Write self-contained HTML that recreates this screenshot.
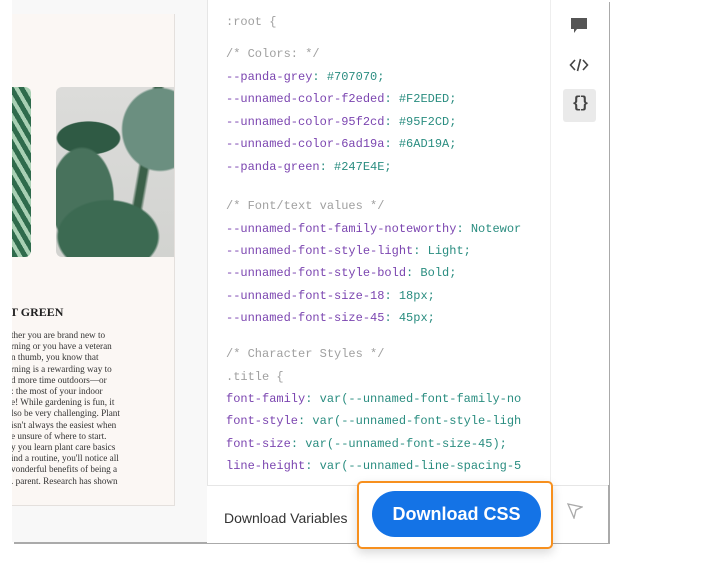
<!DOCTYPE html><html><head><style>
body{margin:0;width:719px;height:564px;background:#fff;position:relative;overflow:hidden;font-family:"Liberation Sans",sans-serif}
.frame{position:absolute;left:12px;top:0;width:596px;height:542px;background:#f8f8f8;box-shadow:2px 2px 0 #aaa}
.art{position:absolute;left:12px;top:14px;width:162px;height:491px;background:#fbf7f4;border-right:1px solid #e4e0dd;border-bottom:1px solid #e4e0dd;overflow:hidden}
.code{position:absolute;left:207px;top:0;width:343px;height:485px;background:#fff;border-left:1px solid #e6e6e6}
.clip{position:absolute;left:0;top:0;width:313px;height:485px;overflow:hidden}
.clip div{position:absolute;left:18px;font-family:"Liberation Mono",monospace;font-size:12px;white-space:nowrap;color:#2a8d80}
.c{color:#a0a0a0!important}.p{color:#7b45b0}
.bar{position:absolute;left:207px;top:485px;width:401px;height:57px;background:#fff;border-top:1px solid #e6e6e6}
.tool{position:absolute;left:550px;top:0;width:58px;height:485px;background:#fff;border-left:1px solid #eee}
</style></head><body>
<div class="frame"></div>
<div class="art">
<div style="position:absolute;left:-10px;top:73px;width:29px;height:170px;border-radius:6px;background:repeating-linear-gradient(60deg,#2f6b4c 0 5px,#a9d0b4 5px 9px)"></div>
<div style="position:absolute;left:44px;top:73px;width:130px;height:170px;border-radius:6px;background:radial-gradient(ellipse 30% 25% at 80% 25%,#6b8f80 0 95%,transparent 100%),radial-gradient(ellipse 40% 22% at 40% 88%,#3c6a52 0 95%,transparent 100%),radial-gradient(ellipse 25% 30% at 20% 65%,#48725c 0 95%,transparent 100%),radial-gradient(ellipse 25% 10% at 25% 30%,#2f5a44 0 95%,transparent 100%),linear-gradient(100deg,transparent 60%,#3a5f48 62% 66%,transparent 68%),linear-gradient(#dcdcda,#d2d3d0)"></div>
<div style="position:absolute;left:-2px;top:291px;font-family:'Liberation Serif',serif;font-size:12px;font-weight:bold;color:#222">T GREEN</div>
<div style="position:absolute;left:-1px;top:316px;font-family:'Liberation Serif',serif;font-size:9.2px;line-height:11.2px;color:#333;white-space:nowrap">ther you are brand new to<br>rning or you have a veteran<br>n thumb, you know that<br>rning is a rewarding way to<br>d more time outdoors—or<br>: the most of your indoor<br>e! While gardening is fun, it<br>lso be very challenging. Plant<br>isn't always the easiest when<br>e unsure of where to start.<br>y you learn plant care basics<br>ind a routine, you'll notice all<br>vonderful benefits of being a<br>. parent. Research has shown</div>
</div>
<div class="code"><div class="clip">
<div class="c" style="top:15px">:root {</div>
<div class="c" style="top:47px">/* Colors: */</div>
<div style="top:70px"><span class="p">--panda-grey</span>: #707070;</div>
<div style="top:92px"><span class="p">--unnamed-color-f2eded</span>: #F2EDED;</div>
<div style="top:115px"><span class="p">--unnamed-color-95f2cd</span>: #95F2CD;</div>
<div style="top:137px"><span class="p">--unnamed-color-6ad19a</span>: #6AD19A;</div>
<div style="top:160px"><span class="p">--panda-green</span>: #247E4E;</div>
<div class="c" style="top:199px">/* Font/text values */</div>
<div style="top:222px"><span class="p">--unnamed-font-family-noteworthy</span>: Noteworthy;</div>
<div style="top:244px"><span class="p">--unnamed-font-style-light</span>: Light;</div>
<div style="top:266px"><span class="p">--unnamed-font-style-bold</span>: Bold;</div>
<div style="top:289px"><span class="p">--unnamed-font-size-18</span>: 18px;</div>
<div style="top:311px"><span class="p">--unnamed-font-size-45</span>: 45px;</div>
<div class="c" style="top:347px">/* Character Styles */</div>
<div class="c" style="top:370px">.title {</div>
<div style="top:392px"><span class="p">font-family</span>: var(--unnamed-font-family-noteworthy);</div>
<div style="top:414px"><span class="p">font-style</span>: var(--unnamed-font-style-light);</div>
<div style="top:437px"><span class="p">font-size</span>: var(--unnamed-font-size-45);</div>
<div style="top:459px"><span class="p">line-height</span>: var(--unnamed-line-spacing-54);</div>
</div></div>
<div class="tool">
<svg style="position:absolute;left:19px;top:17px" width="18" height="17" viewBox="0 0 18 17"><path d="M1 1h16v11H7l-3 4v-4H1z" fill="#555"/></svg>
<svg style="position:absolute;left:18px;top:57px" width="20" height="16" viewBox="0 0 20 16" fill="none" stroke="#444" stroke-width="1.6"><path d="M6 3L1.5 8 6 13M14 3l4.5 5-4.5 5M11.5 2L8.5 14"/></svg>
<div style="position:absolute;left:12px;top:89px;width:33px;height:33px;background:#eaeaea;border-radius:3px"></div>
<div style="position:absolute;left:12px;top:94px;width:33px;text-align:center;font-family:'Liberation Mono',monospace;font-size:16px;font-weight:bold;color:#444;letter-spacing:-2px">{}</div>
</div>
<div class="bar">
<div style="position:absolute;left:17px;top:24px;font-size:14px;color:#333">Download Variables</div>
<svg style="position:absolute;left:360px;top:17px" width="16" height="16" viewBox="0 0 16 16"><path d="M1 1L15 4 9 7 7 15z" fill="none" stroke="#aaa" stroke-width="1.3"/></svg>
</div>
<div style="position:absolute;left:357px;top:481px;width:192px;height:64px;border:2px solid #f7901e;border-radius:5px;background:#fff;box-shadow:0 4px 10px rgba(0,0,0,.15)"></div>
<div style="position:absolute;left:372px;top:491px;width:169px;height:46px;background:#1473e6;border-radius:23px;color:#fff;font-size:18px;font-weight:bold;text-align:center;line-height:46px">Download CSS</div>
</body></html>
